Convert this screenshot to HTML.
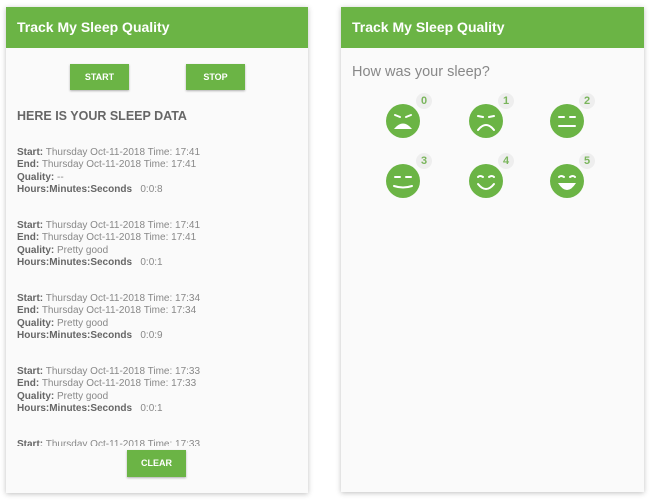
<!DOCTYPE html>
<html><head><style>
body{margin:0;width:650px;height:500px;background:#fff;position:relative;overflow:hidden;font-family:"Liberation Sans",sans-serif}
.card{position:absolute;top:7px;background:#fafafa;box-shadow:0 1px 5px rgba(0,0,0,.25)}
.hdr{height:41px;background:#6bb445;color:#fff;font-weight:bold;font-size:14px;line-height:41px;padding-left:11px}
.btn{position:absolute;background:#6bb445;color:#fff;font-weight:bold;font-size:9px;text-align:center;line-height:26px;box-shadow:0 1px 2px rgba(0,0,0,.3)}
.blk{position:absolute;left:17px;font-size:10px;line-height:12.3px;color:#888}
.blk b{color:#666}
.e{position:absolute;width:34px;height:34px}
.n{position:absolute;width:16px;height:16px;border-radius:50%;background:#eee;color:#7ab55c;font-weight:bold;font-size:11px;text-align:center;line-height:16px}
</style></head><body>
<div class="card" style="left:6px;width:302px;height:486px">
<div class="hdr">Track My Sleep Quality</div>
</div>
<div class="btn" style="left:70px;top:64px;width:59px">START</div>
<div class="btn" style="left:186px;top:64px;width:59px">STOP</div>
<div style="position:absolute;left:17px;top:109px;font-size:12.5px;font-weight:bold;color:#666">HERE IS YOUR SLEEP DATA</div>
<div class="blk" style="top:147px"><b>Start:</b> Thursday Oct-11-2018 Time: 17:41<br><b>End:</b> Thursday Oct-11-2018 Time: 17:41<br><b>Quality:</b> --<br><b>Hours:Minutes:Seconds</b> &nbsp; 0:0:8</div>
<div class="blk" style="top:220px"><b>Start:</b> Thursday Oct-11-2018 Time: 17:41<br><b>End:</b> Thursday Oct-11-2018 Time: 17:41<br><b>Quality:</b> Pretty good<br><b>Hours:Minutes:Seconds</b> &nbsp; 0:0:1</div>
<div class="blk" style="top:293px"><b>Start:</b> Thursday Oct-11-2018 Time: 17:34<br><b>End:</b> Thursday Oct-11-2018 Time: 17:34<br><b>Quality:</b> Pretty good<br><b>Hours:Minutes:Seconds</b> &nbsp; 0:0:9</div>
<div class="blk" style="top:366px"><b>Start:</b> Thursday Oct-11-2018 Time: 17:33<br><b>End:</b> Thursday Oct-11-2018 Time: 17:33<br><b>Quality:</b> Pretty good<br><b>Hours:Minutes:Seconds</b> &nbsp; 0:0:1</div>
<div class="blk" style="top:439px;height:7px;overflow:hidden"><b>Start:</b> Thursday Oct-11-2018 Time: 17:33</div>
<div class="btn" style="left:127px;top:450px;width:59px;height:27px;line-height:27px">CLEAR</div>

<div class="card" style="left:341px;width:303px;height:485px">
<div class="hdr">Track My Sleep Quality</div>
</div>
<div style="position:absolute;left:352px;top:64px;font-size:14.5px;color:#888">How was your sleep?</div>

<div class="n" style="left:416px;top:93px">0</div>
<div class="n" style="left:498px;top:93px">1</div>
<div class="n" style="left:579px;top:93px">2</div>
<div class="n" style="left:416px;top:153px">3</div>
<div class="n" style="left:498px;top:153px">4</div>
<div class="n" style="left:579px;top:153px">5</div>

<svg class="e" style="left:386px;top:104px" viewBox="0 0 34 34"><circle cx="17" cy="17" r="17" fill="#6bb445"/><g stroke="#fff" stroke-width="2" fill="none" stroke-linecap="round"><path d="M9 11l5 2M25 11l-5 2"/></g><path d="M8 25q9-11 18 0z" fill="#fff"/></svg>
<svg class="e" style="left:469px;top:104px" viewBox="0 0 34 34"><circle cx="17" cy="17" r="17" fill="#6bb445"/><g stroke="#fff" stroke-width="2" fill="none" stroke-linecap="round"><path d="M9 12l5 1M25 12l-5 1M9 26q8-10 16 0"/></g></svg>
<svg class="e" style="left:550px;top:104px" viewBox="0 0 34 34"><circle cx="17" cy="17" r="17" fill="#6bb445"/><g stroke="#fff" stroke-width="2" fill="none" stroke-linecap="round"><path d="M9 13h5M20 13h5M9 22h16"/></g></svg>
<svg class="e" style="left:386px;top:164px" viewBox="0 0 34 34"><circle cx="17" cy="17" r="17" fill="#6bb445"/><g stroke="#fff" stroke-width="2" fill="none" stroke-linecap="round"><path d="M9 13h5M20 13h5M8 22q9 3 18 0"/></g></svg>
<svg class="e" style="left:469px;top:164px" viewBox="0 0 34 34"><circle cx="17" cy="17" r="17" fill="#6bb445"/><g stroke="#fff" stroke-width="2" fill="none" stroke-linecap="round"><path d="M9 13q2-2 5 0M20 13q3-2 5 0M9 20q8 10 16 0"/></g></svg>
<svg class="e" style="left:550px;top:164px" viewBox="0 0 34 34"><circle cx="17" cy="17" r="17" fill="#6bb445"/><g stroke="#fff" stroke-width="2" fill="none" stroke-linecap="round"><path d="M9 13q2-2 5 0M20 13q3-2 5 0"/></g><path d="M8 19h18q-9 14-18 0z" fill="#fff"/></svg>
</body></html>
